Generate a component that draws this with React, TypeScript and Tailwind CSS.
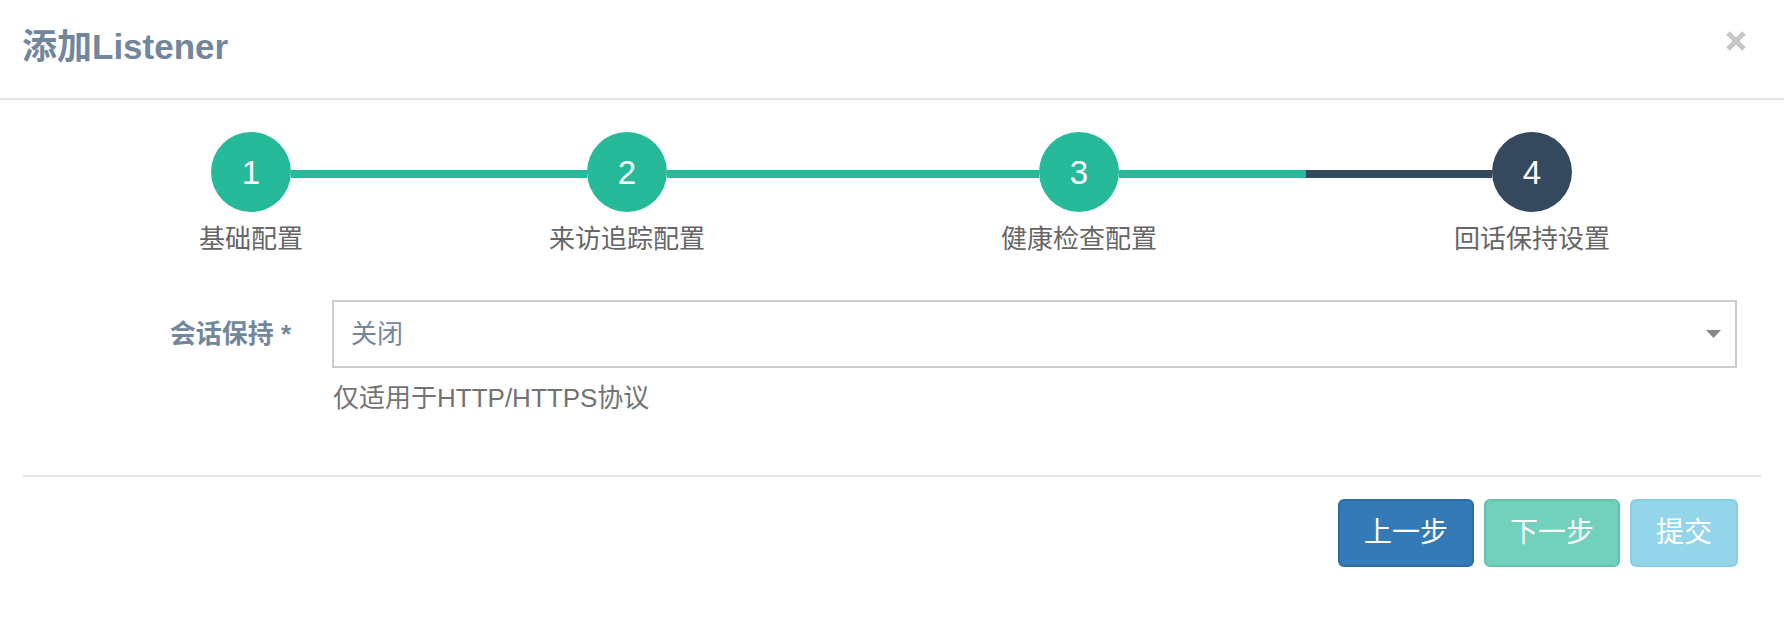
import React from "react";

const font = "font-['Liberation_Sans','Noto_Sans_CJK_SC',sans-serif]";

const steps = [
  { no: 1, label: "基础配置", state: "done" },
  { no: 2, label: "来访追踪配置", state: "done" },
  { no: 3, label: "健康检查配置", state: "done" },
  { no: 4, label: "回话保持设置", state: "selected" },
];

function Step({ no, label, state }: { no: number; label: string; state: string }) {
  return (
    <div className="flex w-[80px] shrink-0 flex-col items-center">
      <div
        className={
          "flex h-[80px] w-[80px] items-center justify-center rounded-full text-[33px] leading-none text-white " +
          (state === "selected" ? "bg-[#34495e]" : "bg-[#26b99a]")
        }
      >
        {no}
      </div>
      <div className="mt-[9px] whitespace-nowrap text-[26px] leading-[36px] text-[#666]">{label}</div>
    </div>
  );
}

export default function App() {
  return (
    <div className={`${font} h-[618px] w-[1784px] overflow-hidden bg-white`}>
      {/* header */}
      <div className="flex h-[100px] items-start justify-between border-b-2 border-[#e5e5e5] pl-[22px] pr-[37px] pt-[27px]">
        <h4 className="text-[35px] font-bold leading-[40px] text-[#73879c]">添加Listener</h4>
        <button className="mt-[3px] flex h-[22px] w-[22px] items-center justify-center">
          <svg width="22" height="22" viewBox="0 0 22 22">
            <path d="M3 3 L19 19 M19 3 L3 19" stroke="#c6c6c6" strokeWidth="5" />
          </svg>
        </button>
      </div>

      {/* wizard steps */}
      <div className="flex items-start pl-[211px] pt-[32px]">
        <Step {...steps[0]} />
        <div className="mt-[38px] h-[8px] w-[296px] bg-[#26b99a]" />
        <Step {...steps[1]} />
        <div className="mt-[38px] h-[8px] w-[372px] bg-[#26b99a]" />
        <Step {...steps[2]} />
        <div className="mt-[38px] flex h-[8px] w-[373px]">
          <div className="h-full w-[187px] bg-[#26b99a]" />
          <div className="h-full flex-1 bg-[#34495e]" />
        </div>
        <Step {...steps[3]} />
      </div>

      {/* form */}
      <div className="mt-[43px] flex items-center">
        <label className="w-[291px] text-right text-[26px] font-bold leading-[36px] text-[#73879c]">
          会话保持 *
        </label>
        <div className="ml-[41px] flex h-[68px] w-[1405px] items-center justify-between border-2 border-[#ccc] pl-[17px] pr-[14px]">
          <span className="text-[26px] leading-none text-[#73879c]">关闭</span>
          <svg width="15" height="8" viewBox="0 0 15 8">
            <path d="M0 0 L15 0 L7.5 8 Z" fill="#888" />
          </svg>
        </div>
      </div>
      <p className="ml-[333px] mt-[12px] text-[26px] leading-[36px] text-[#737373]">仅适用于HTTP/HTTPS协议</p>

      <div className="mx-[23px] mt-[59px] h-[2px] bg-[#e5e5e5]" />

      {/* footer */}
      <div className="flex justify-end gap-[10px] pr-[46px] pt-[22px]">
        <button className="h-[68px] w-[136px] rounded-[6px] border-2 border-[#2e6da4] bg-[#337ab7] text-[28px] text-white">
          上一步
        </button>
        <button className="h-[68px] w-[136px] rounded-[6px] border-2 border-[#169f85] bg-[#26b99a] text-[28px] text-white opacity-65">
          下一步
        </button>
        <button className="h-[68px] w-[108px] rounded-[6px] border-2 border-[#46b8da] bg-[#5bc0de] text-[28px] text-white opacity-65">
          提交
        </button>
      </div>
    </div>
  );
}
